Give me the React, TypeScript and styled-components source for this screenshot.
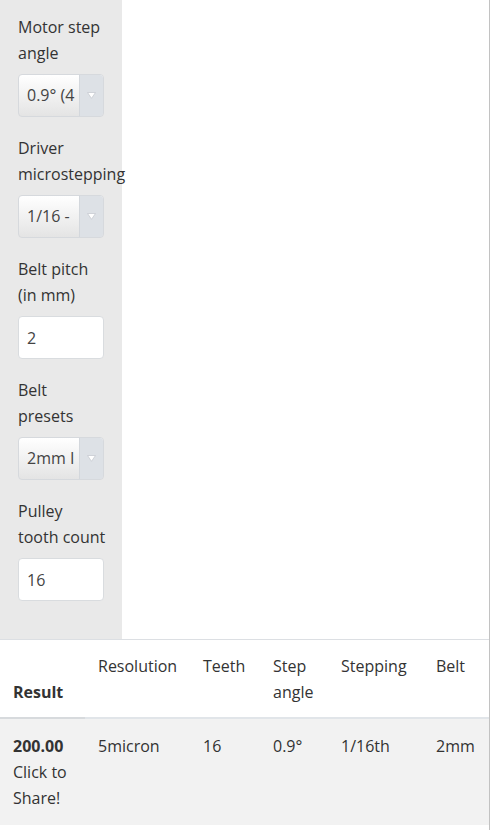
import React from "react";
import styled, { createGlobalStyle } from "styled-components";

const GlobalStyle = createGlobalStyle`
  html, body {
    margin: 0;
    padding: 0;
    background: #ffffff;
  }
  body {
    font-family: "Open Sans", "Liberation Sans", sans-serif;
    color: #333333;
    font-size: 16px;
  }
`;

const Page = styled.div`
  width: 489px;
  min-height: 830px;
  border-right: 1px solid #c2c2c2;
  background: #ffffff;
  overflow: hidden;
`;

const Top = styled.div`
  display: flex;
`;

const Sidebar = styled.aside`
  width: 122px;
  box-sizing: border-box;
  padding: 14px 18px 20px 18px;
  background: #e9e9e9;
`;

const Field = styled.div`
  margin-bottom: 18px;
`;

const Label = styled.div`
  line-height: 26px;
  margin-bottom: 8px;
  white-space: nowrap;
`;

const SelectBox = styled.div`
  display: flex;
  height: 43px;
  box-sizing: border-box;
  border: 1px solid #d6d9dd;
  border-radius: 4px;
  overflow: hidden;
  background: linear-gradient(#ffffff, #e4e4e4);
`;

const SelectText = styled.span`
  flex: 1;
  padding-left: 8px;
  line-height: 41px;
  white-space: nowrap;
  overflow: hidden;
  color: #444444;
`;

const SelectArrow = styled.span`
  width: 23px;
  flex: none;
  display: flex;
  align-items: center;
  justify-content: center;
  background: #dde1e6;
  border-left: 1px solid #d3d7dc;
`;

const TextInput = styled.input`
  display: block;
  width: 100%;
  height: 43px;
  box-sizing: border-box;
  border: 1px solid #d9dcdf;
  border-radius: 4px;
  padding: 0 8px;
  font: inherit;
  color: #444444;
  background: #ffffff;
  outline: none;
`;

const Table = styled.table`
  width: 489px;
  border-collapse: collapse;
  table-layout: fixed;
  border-top: 1px solid #dcdfe3;
`;

const HeadCell = styled.th<{ $bold?: boolean; $w: number }>`
  width: ${(p) => p.$w - 13}px;
  text-align: left;
  vertical-align: ${(p) => (p.$bold ? "bottom" : "top")};
  font-weight: ${(p) => (p.$bold ? 700 : 400)};
  line-height: 26px;
  padding: 13px 0 12px 13px;
  border-bottom: 2px solid ${(p) => (p.$bold ? "#d7dadd" : "#e1e5e9")};
`;

const BodyRow = styled.tr`
  background: #f2f2f2;
`;

const Cell = styled.td`
  vertical-align: top;
  line-height: 26px;
  padding: 14px 0 14px 13px;
  word-wrap: break-word;
`;

const Strong = styled.div`
  font-weight: 700;
`;

const Arrow = () => (
  <svg width="9" height="7" viewBox="0 0 9 7">
    <path d="M0.5 0.5 H8.5 L4.5 6.3 Z" fill="#ffffff" stroke="#c6cad0" strokeWidth="0.8" />
  </svg>
);

const Select = ({ value }: { value: string }) => (
  <SelectBox>
    <SelectText>{value}</SelectText>
    <SelectArrow>
      <Arrow />
    </SelectArrow>
  </SelectBox>
);

const App = () => {
  return (
    <Page>
      <GlobalStyle />
      <Top>
        <Sidebar>
          <Field>
            <Label>Motor step<br />angle</Label>
            <Select value="0.9° (4" />
          </Field>
          <Field>
            <Label>Driver<br />microstepping</Label>
            <Select value="1/16 -" />
          </Field>
          <Field>
            <Label>Belt pitch<br />(in mm)</Label>
            <TextInput defaultValue="2" />
          </Field>
          <Field>
            <Label>Belt<br />presets</Label>
            <Select value="2mm I" />
          </Field>
          <Field>
            <Label>Pulley<br />tooth count</Label>
            <TextInput defaultValue="16" />
          </Field>
        </Sidebar>
      </Top>
      <Table>
        <thead>
          <tr>
            <HeadCell $bold $w={85}>Result</HeadCell>
            <HeadCell $w={105}>Resolution</HeadCell>
            <HeadCell $w={70}>Teeth</HeadCell>
            <HeadCell $w={68}>Step angle</HeadCell>
            <HeadCell $w={95}>Stepping</HeadCell>
            <HeadCell $w={66}>Belt</HeadCell>
          </tr>
        </thead>
        <tbody>
          <BodyRow>
            <Cell>
              <Strong>200.00</Strong>
              Click to Share!
            </Cell>
            <Cell>5micron</Cell>
            <Cell>16</Cell>
            <Cell>0.9°</Cell>
            <Cell>1/16th</Cell>
            <Cell>2mm</Cell>
          </BodyRow>
        </tbody>
      </Table>
    </Page>
  );
};

export default App;
